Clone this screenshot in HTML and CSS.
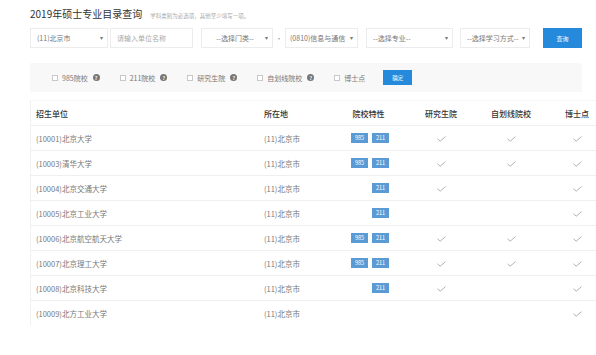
FILE: index.html
```html
<!DOCTYPE html>
<html lang="zh-CN">
<head>
    <meta charset="UTF-8">
    <title>2019年硕士专业目录查询</title>
    <link rel="stylesheet" href="styles.css">
</head>
<body>
    <div class="page">
        <div class="heading">
            <h1>2019年硕士专业目录查询</h1>
            <span class="hint">学科类别为必选项，其他至少填写一项。</span>
        </div>

        <div class="search">
            <div class="field w-city">(11)北京市<span class="arrow">▾</span></div>
            <div class="field w-name placeholder">请输入单位名称</div>
            <div class="field w-cat">--选择门类--<span class="arrow">▾</span></div>
            <span class="sep">·</span>
            <div class="field w-sub">(0810)信息与通信<span class="arrow">▾</span></div>
            <div class="field w-major">--选择专业--<span class="arrow">▾</span></div>
            <div class="field w-mode">--选择学习方式--<span class="arrow">▾</span></div>
            <button class="btn btn-search">查询</button>
        </div>

        <div class="filters">
            <label class="check"><span class="box"></span>985院校<span class="help">?</span></label>
            <label class="check"><span class="box"></span>211院校<span class="help">?</span></label>
            <label class="check"><span class="box"></span>研究生院<span class="help">?</span></label>
            <label class="check"><span class="box"></span>自划线院校<span class="help">?</span></label>
            <label class="check"><span class="box"></span>博士点</label>
            <button class="btn btn-ok">确定</button>
        </div>

        <table class="list">
            <thead>
                <tr>
                    <th class="c-name">招生单位</th>
                    <th class="c-loc">所在地</th>
                    <th class="c-tag">院校特性</th>
                    <th class="c-mark">研究生院</th>
                    <th class="c-mark">自划线院校</th>
                    <th class="c-last">博士点</th>
                </tr>
            </thead>
            <tbody id="rows"></tbody>
        </table>
    </div>

    <script>
        const schools = [
            ['(10001)北京大学', true, true, true, true, true],
            ['(10003)清华大学', true, true, true, true, true],
            ['(10004)北京交通大学', false, true, true, false, true],
            ['(10005)北京工业大学', false, true, false, false, true],
            ['(10006)北京航空航天大学', true, true, true, true, true],
            ['(10007)北京理工大学', true, true, true, true, true],
            ['(10008)北京科技大学', false, true, true, false, true],
            ['(10009)北方工业大学', false, false, false, false, true]
        ];

        const check = '<svg width="9" height="6" viewBox="0 0 9 6"><polyline points="0.5,2.8 3.2,5.2 8.5,0.6" fill="none" stroke="#a8a8a8" stroke-width="0.9"/></svg>';
        const mark = on => on ? check : '';

        document.getElementById('rows').innerHTML = schools.map(s => `
            <tr>
                <td class="c-name">${s[0]}</td>
                <td class="c-loc">(11)北京市</td>
                <td class="c-tag"><div class="tags">${s[1] ? '<span class="tag">985</span>' : ''}${s[2] ? '<span class="tag">211</span>' : ''}</div></td>
                <td class="c-mark">${mark(s[3])}</td>
                <td class="c-mark">${mark(s[4])}</td>
                <td class="c-last">${mark(s[5])}</td>
            </tr>`).join('');
    </script>
</body>
</html>
```

FILE: styles.css
```css
html, body {
    margin: 0;
    background: #ffffff;
    overflow: hidden;
}

body {
    font-family: "Noto Sans CJK SC", "Noto Sans", sans-serif;
    color: #777777;
}

.page {
    padding: 6px 0 0 30px;
}

.heading {
    display: flex;
    align-items: baseline;
    gap: 8px;
    height: 16px;
    margin-bottom: 6px;
}

.heading h1 {
    margin: 0;
    font-size: 10px;
    font-weight: normal;
    color: #333333;
    line-height: 16px;
}

.heading .hint {
    font-size: 5.5px;
    color: #aaaaaa;
}

.search {
    display: flex;
    align-items: center;
    height: 20px;
}

.field {
    position: relative;
    box-sizing: border-box;
    height: 20px;
    line-height: 18px;
    padding-left: 6px;
    border: 1px solid #ececec;
    font-size: 7px;
    color: #777777;
}

.field .arrow {
    position: absolute;
    right: 4px;
    top: 0;
    font-size: 6px;
    color: #777777;
}

.placeholder {
    color: #aaaaaa;
}

.w-city { width: 78px; }
.w-name { width: 83px; margin-left: 2px; }
.w-cat { width: 72px; margin-left: 8px; text-align: center; padding-right: 10px; }
.w-sub { width: 73px; padding-left: 4px; }
.w-major { width: 87px; margin-left: 8px; }
.w-mode { width: 70px; margin-left: 7px; }

.sep {
    width: 12px;
    text-align: center;
    font-size: 7px;
    color: #999999;
}

.btn {
    border: none;
    padding: 0;
    color: #ffffff;
    font-family: inherit;
    cursor: pointer;
}

.btn-search {
    width: 39px;
    height: 20px;
    margin-left: 13px;
    background-color: #2589dc;
    font-size: 6px;
}

.filters {
    display: flex;
    align-items: center;
    box-sizing: border-box;
    width: 552px;
    height: 29px;
    margin-top: 15px;
    padding-left: 22px;
    background-color: #f8f8f8;
    font-size: 7px;
    color: #777777;
}

.check {
    display: flex;
    align-items: center;
    margin-right: 20px;
}

.check .box {
    box-sizing: border-box;
    width: 6px;
    height: 6px;
    margin-right: 4px;
    border: 1px solid #c8c8c8;
    background: #ffffff;
}

.check .help {
    width: 7px;
    height: 7px;
    margin-left: 5px;
    border-radius: 50%;
    background-color: #777777;
    color: #ffffff;
    font-size: 5px;
    font-weight: bold;
    line-height: 7px;
    text-align: center;
}

.btn-ok {
    width: 29px;
    height: 15px;
    margin-left: -2px;
    background-color: #2589dc;
    font-size: 5.5px;
}

.list {
    margin-top: 8px;
    border-collapse: collapse;
    table-layout: fixed;
    width: 566px;
    border-left: 1px solid #f0f0f0;
    border-top: 1px solid #f6f6f6;
}

.list th,
.list td {
    height: 24px;
    padding: 0;
    border-bottom: 1px solid #efefef;
    font-size: 7.5px;
    text-align: left;
    vertical-align: middle;
}

.list tbody tr:last-child td {
    border-bottom: none;
}

.list th {
    font-size: 8px;
    font-weight: 500;
    color: #333333;
}

.c-name { width: 223px; padding-left: 5px !important; }
.c-loc { width: 67px; padding-left: 5px !important; }
.c-tag { width: 75px; }
.c-mark { width: 70px; }
.c-last { width: 56px; }

.list th.c-tag,
.list .c-mark,
.list .c-last {
    text-align: center;
}

.list .c-last {
    padding-left: 3px;
}

.tags {
    display: flex;
    justify-content: flex-end;
    gap: 4px;
    padding-right: 17px;
}

.tag {
    width: 17px;
    height: 10px;
    line-height: 10px;
    background-color: #5b9bd5;
    color: #ffffff;
    font-size: 5.5px;
    text-align: center;
}

.list svg {
    display: inline-block;
    vertical-align: middle;
}
```
